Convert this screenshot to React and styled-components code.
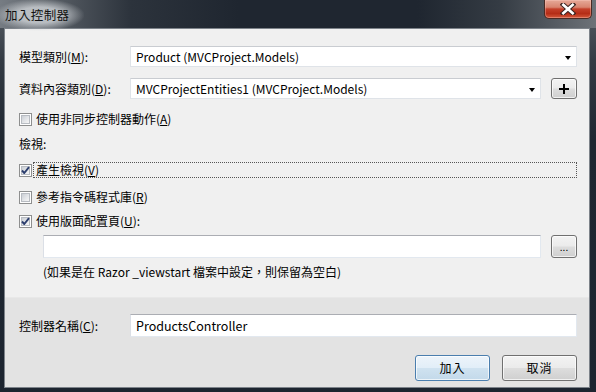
import React from "react";
import styled, { createGlobalStyle } from "styled-components";

const Global = createGlobalStyle`
  html, body { margin: 0; padding: 0; background: #1f2731; }
  body { font-family: "Noto Sans CJK TC", "Noto Sans", sans-serif; font-size: 12px; color: #000; }
  * { box-sizing: border-box; }
`;

const Window = styled.div`
  width: 596px;
  height: 392px;
  display: flex;
  flex-direction: column;
  background: linear-gradient(to bottom, #5a6067 0px, #343b44 60px, #1f2731 140px, #1d2530 100%);
  overflow: hidden;
`;

const TitleBar = styled.div`
  position: relative;
  height: 28px;
  flex: none;
  display: flex;
  align-items: center;
  padding-left: 5px;
  padding-bottom: 1px;
  background: linear-gradient(to right, #767c83 0%, #5b6168 8%, #2c333c 22%, #1f2630 40%, #1f2630 70%, #353c44 84%, #6d7278 100%);
`;

const TitleText = styled.span`
  position: relative;
  font-size: 12.5px;
  letter-spacing: 0.4px;
  color: #111;
  line-height: 16px;
  margin-top: 2px;
  &::before {
    content: "";
    position: absolute;
    left: -10px;
    right: -14px;
    top: -8px;
    bottom: -8px;
    background: radial-gradient(ellipse at center, rgba(200, 204, 208, 0.85) 35%, rgba(160, 165, 170, 0) 72%);
    z-index: -1;
  }
  z-index: 0;
`;

const CloseButton = styled.div`
  position: absolute;
  top: 0;
  right: 4px;
  width: 48px;
  height: 19px;
  border: 1px solid #4a2a24;
  border-top: none;
  border-radius: 0 0 5px 5px;
  background: linear-gradient(to bottom, #e6a998 0%, #d88470 40%, #c4402a 50%, #b52d17 75%, #d4583a 100%);
  box-shadow: inset 0 0 0 1px rgba(255, 210, 200, 0.35);
  display: flex;
  align-items: center;
  justify-content: center;
`;

const Client = styled.div`
  flex: 1;
  margin: 0 6px 4px 4px;
  border: 1px solid #7d838a;
  display: flex;
  flex-direction: column;
  background: #f0f0f0;
`;

const TopPanel = styled.div`
  height: 268px;
  flex: none;
  background: #f0f0f0;
  padding: 17px 12px 0 13px;
  display: flex;
  flex-direction: column;
`;

const BottomPanel = styled.div`
  flex: 1;
  background: #e3e3e3;
  border-top: 1px solid #e8e8e8;
  padding: 16px 12px 0 13px;
  display: flex;
  flex-direction: column;
`;

const FieldRow = styled.div`
  display: flex;
  align-items: center;
  height: ${(p) => p.$h || 21}px;
  margin-top: ${(p) => p.$mt || 0}px;
`;

const Label = styled.div`
  width: 112px;
  flex: none;
  padding-left: 1px;
  line-height: 16px;
  white-space: nowrap;
`;

const Combo = styled.div`
  flex: 1;
  height: 21px;
  background: #fff;
  border: 1px solid #dfe3e8;
  border-top-color: #c9ccd1;
  display: flex;
  align-items: center;
  padding-left: 5px;
  padding-right: 5px;
  line-height: 16px;
  white-space: nowrap;
`;

const ComboText = styled.span`
  flex: 1;
`;

const Arrow = styled.span`
  width: 0;
  height: 0;
  border-left: 3.5px solid transparent;
  border-right: 3.5px solid transparent;
  border-top: 4px solid #000;
  margin-top: 2px;
`;

const TextBox = styled.div`
  flex: 1;
  height: 23px;
  background: #fff;
  border: 1px solid #e2e8ef;
  border-top-color: #abadb3;
  border-left-color: #dbdfe6;
  display: flex;
  align-items: center;
  padding-left: 5px;
  font-size: 12.5px;
  line-height: 16px;
`;

const SmallButton = styled.div`
  width: 26px;
  height: ${(p) => p.$h || 21}px;
  margin-left: 10px;
  flex: none;
  border: 1px solid #707070;
  border-radius: 3px;
  background: linear-gradient(to bottom, #f3f3f3 0%, #ebebeb 48%, #dddddd 52%, #cfcfcf 100%);
  box-shadow: inset 0 0 0 1px rgba(255, 255, 255, 0.7);
  display: flex;
  align-items: center;
  justify-content: center;
  font-size: 10px;
  line-height: 10px;
`;

const CheckRow = styled.div`
  display: flex;
  align-items: center;
  height: 16px;
  margin-top: ${(p) => p.$mt || 0}px;
  padding-left: ${(p) => p.$indent || 0}px;
`;

const Box = styled.span`
  width: 13px;
  height: 13px;
  flex: none;
  margin-left: 1px;
  border: 1px solid #8e8f8f;
  background: #fff;
  padding: 1px;
  display: flex;
`;

const BoxInner = styled.span`
  flex: 1;
  background: linear-gradient(135deg, #cbcfd5 0%, #e4e6e9 55%, #f6f6f6 100%);
  border: 1px solid #b8bcc2;
  position: relative;
`;

const CheckMark = styled.svg`
  position: absolute;
  left: -2px;
  top: -2px;
`;

const CheckLabel = styled.span`
  margin-left: ${(p) => (p.$focus ? 1 : 4)}px;
  line-height: 14px;
  white-space: nowrap;
  ${(p) =>
    p.$focus &&
    `
    flex: 1;
    border: 1px dotted #555;
    padding: 0 2px;
    height: 16px;
    line-height: 14px;
  `}
`;

const PlainText = styled.div`
  height: 16px;
  line-height: 16px;
  margin-top: ${(p) => p.$mt || 0}px;
  padding-left: ${(p) => p.$indent || 1}px;
  white-space: nowrap;
`;

const LayoutRow = styled.div`
  display: flex;
  align-items: center;
  height: 23px;
  margin-top: 6px;
  padding-left: 25px;
`;

const ButtonRow = styled.div`
  display: flex;
  justify-content: flex-end;
  gap: 12px;
  margin-top: 18px;
`;

const DialogButton = styled.div`
  width: 75px;
  height: 26px;
  border-radius: 3px;
  border: 1px solid ${(p) => (p.$default ? "#4a7eae" : "#707070")};
  background: ${(p) =>
    p.$default
      ? "linear-gradient(to bottom, #edf4fa 0%, #e2eef8 48%, #cfe2f0 52%, #c3d9ea 100%)"
      : "linear-gradient(to bottom, #f3f3f3 0%, #ebebeb 48%, #dddddd 52%, #cfcfcf 100%)"};
  box-shadow: inset 0 0 0 1px rgba(255, 255, 255, 0.7);
  display: flex;
  align-items: center;
  justify-content: center;
  line-height: 16px;
  letter-spacing: 1px;
`;

function CheckBox({ checked }) {
  return (
    <Box>
      <BoxInner>
        {checked && (
          <CheckMark width="11" height="11" viewBox="0 0 11 11">
            <path d="M2 5.5 L4.3 8 L9 2.2" fill="none" stroke="#2c3e6e" strokeWidth="1.9" strokeLinejoin="round" />
          </CheckMark>
        )}
      </BoxInner>
    </Box>
  );
}

export default function App() {
  return (
    <>
      <Global />
      <Window>
        <TitleBar>
          <TitleText>加入控制器</TitleText>
          <CloseButton>
            <svg width="16" height="12" viewBox="0 0 16 12">
              <path d="M3 1.5 L13 10.5 M13 1.5 L3 10.5" stroke="#3a2320" strokeWidth="4.6" strokeLinecap="square" />
              <path d="M3.3 1.8 L12.7 10.2 M12.7 1.8 L3.3 10.2" stroke="#ffffff" strokeWidth="2.6" strokeLinecap="square" />
            </svg>
          </CloseButton>
        </TitleBar>
        <Client>
          <TopPanel>
            <FieldRow>
              <Label>
                模型類別(<u>M</u>):
              </Label>
              <Combo>
                <ComboText>Product (MVCProject.Models)</ComboText>
                <Arrow />
              </Combo>
            </FieldRow>
            <FieldRow $mt={11}>
              <Label>
                資料內容類別(<u>D</u>):
              </Label>
              <Combo>
                <ComboText>MVCProjectEntities1 (MVCProject.Models)</ComboText>
                <Arrow />
              </Combo>
              <SmallButton>
                <svg width="12" height="12" viewBox="0 0 12 12">
                  <path d="M6 1 V11 M1 6 H11" stroke="#000" strokeWidth="2" />
                </svg>
              </SmallButton>
            </FieldRow>
            <CheckRow $mt={12}>
              <CheckBox />
              <CheckLabel>
                使用非同步控制器動作(<u>A</u>)
              </CheckLabel>
            </CheckRow>
            <PlainText $mt={9}>檢視:</PlainText>
            <CheckRow $mt={10}>
              <CheckBox checked />
              <CheckLabel $focus>
                產生檢視(<u>V</u>)
              </CheckLabel>
            </CheckRow>
            <CheckRow $mt={11}>
              <CheckBox />
              <CheckLabel>
                參考指令碼程式庫(<u>R</u>)
              </CheckLabel>
            </CheckRow>
            <CheckRow $mt={8}>
              <CheckBox checked />
              <CheckLabel>
                使用版面配置頁(<u>U</u>):
              </CheckLabel>
            </CheckRow>
            <LayoutRow>
              <TextBox />
              <SmallButton $h={23}>...</SmallButton>
            </LayoutRow>
            <PlainText $mt={6} $indent={25}>
              (如果是在 Razor _viewstart 檔案中設定，則保留為空白)
            </PlainText>
          </TopPanel>
          <BottomPanel>
            <FieldRow $h={23}>
              <Label>
                控制器名稱(<u>C</u>):
              </Label>
              <TextBox>ProductsController</TextBox>
            </FieldRow>
            <ButtonRow>
              <DialogButton $default>加入</DialogButton>
              <DialogButton>取消</DialogButton>
            </ButtonRow>
          </BottomPanel>
        </Client>
      </Window>
    </>
  );
}
